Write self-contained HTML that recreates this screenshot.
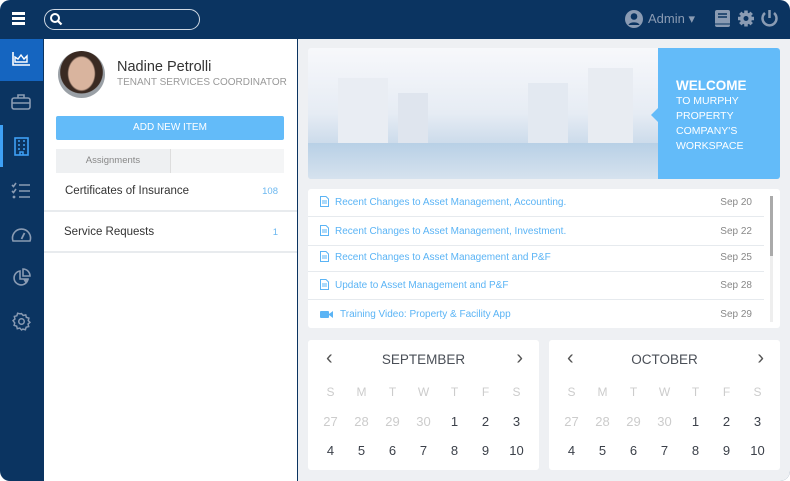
<!DOCTYPE html>
<html><head><meta charset="utf-8"><style>
*{box-sizing:border-box;margin:0;padding:0}
body{width:790px;height:481px;background:#fff;font-family:"Liberation Sans",sans-serif;overflow:hidden;position:relative}
.frame{position:absolute;left:0;top:0;width:790px;height:481px;background:#0b3461;border-radius:10px;overflow:hidden}
.search{position:absolute;left:44px;top:9px;width:156px;height:21px;border:1.5px solid #cfd8e3;border-radius:11px}
.side-act{position:absolute;left:0;top:39px;width:43px;height:42px;background:#1565c0}
.bar{position:absolute;left:0;top:125px;width:3px;height:42px;background:#3ea0f5}
.left{position:absolute;left:44px;top:39px;width:253px;height:442px;background:#fff}
.right{position:absolute;left:298px;top:39px;width:492px;height:442px;background:#eef0f3}
.ico{position:absolute}
.name{position:absolute;left:73px;top:20px;font-size:14.5px;color:#333}
.role{position:absolute;left:73px;top:38px;font-size:10px;color:#999}
.btn{position:absolute;left:12px;top:77px;width:228px;height:24px;background:#63bbf9;border-radius:2px;color:#fff;font-size:10px;text-align:center;line-height:24px}
.tabs{position:absolute;left:12px;top:110px;width:228px;height:24px;background:#f4f5f6}
.tab{position:absolute;left:0;top:0;width:115px;height:24px;background:#eef0f2;border-right:1px solid #ddd;color:#888;font-size:9.5px;text-align:center;line-height:24px}
.row{position:absolute;left:0;width:253px;height:40px;border-bottom:2px solid #e8ebee;font-size:11.5px;color:#333}
.row span{position:absolute;top:13px}
.row b{position:absolute;right:19px;top:14px;font-weight:normal;font-size:9.5px;color:#6cb8f0}
.banner{position:absolute;left:10px;top:9px;width:472px;height:131px;background:linear-gradient(180deg,#f7f8fb 0%,#e6ecf4 50%,#c4d6e8 80%,#dfe6ee 100%);border-radius:3px;overflow:hidden}
.welcome{position:absolute;left:350px;top:0;width:122px;height:131px;background:#63bbf9;color:#fff;padding:29px 0 0 18px;font-size:10.5px;line-height:15px}
.welcome:before{content:"";position:absolute;left:-7px;top:60px;border:7px solid transparent;border-right-color:#63bbf9;border-left:0}
.news{position:absolute;left:10px;top:150px;width:472px;height:139px;background:#fff;border-radius:3px}
.ni{position:absolute;left:0;width:456px;height:28px;border-bottom:1.5px solid #e6eaee;font-size:10px;color:#5bb4f5}
.ni .t{position:absolute;left:27px;top:8px}
.ni .d{position:absolute;right:12px;top:8px;color:#888}
.ni svg{position:absolute;left:12px;top:7px}
.sb{position:absolute;left:462px;top:7px;width:3px;height:126px;background:#eee}
.sb i{position:absolute;left:0;top:0;width:3px;height:60px;background:#aaa}
.cal{position:absolute;top:301px;width:231px;height:130px;background:#fff;border-radius:3px}
.cal .m{position:absolute;top:12px;width:100%;text-align:center;font-size:13.5px;color:#4a4f57}
.cal .ar{position:absolute;top:7px;font-size:20px;color:#555}
.cal table{position:absolute;left:7px;top:37px;width:217px;border-collapse:collapse}
.cal td{width:31px;height:29.5px;text-align:center;font-size:13px;color:#3c414a}
.cal tr.h td{color:#ccc;font-size:12px}
.cal td.g{color:#ccc}
</style></head><body>
<div class="frame">
<div class="ico" style="left:12px;top:12px;width:13px;height:2.5px;background:#fff;box-shadow:0 5px 0 #fff,0 10px 0 #fff"></div>
<div class="search"><svg width="14" height="14" style="position:absolute;left:4px;top:2px" viewBox="0 0 14 14"><circle cx="6" cy="6" r="4" stroke="#fff" stroke-width="2" fill="none"/><path d="M9 9l3.5 3.5" stroke="#fff" stroke-width="2.2"/></svg></div>
<svg class="ico" style="left:624px;top:9px" width="20" height="20" viewBox="0 0 20 20"><circle cx="10" cy="10" r="9" fill="#8a9bb3"/><circle cx="10" cy="7.5" r="3.3" fill="#0b3461"/><path d="M4.5 16c1-3.5 10-3.5 11 0" fill="#0b3461"/></svg>
<div class="ico" style="left:648px;top:11px;font-size:13px;color:#8a9bb3">Admin ▾</div>
<svg class="ico" style="left:714px;top:9px" width="17" height="19" viewBox="0 0 17 19"><rect x="1" y="1" width="15" height="17" rx="2" fill="#8a9bb3"/><path d="M4 5h9M4 8h9" stroke="#0b3461" stroke-width="1.5"/><path d="M1 15h15" stroke="#0b3461"/></svg>
<svg class="ico" style="left:737px;top:9px" width="18" height="19" viewBox="0 0 18 18"><circle cx="9" cy="9" r="6" fill="#8a9bb3"/><g stroke="#8a9bb3" stroke-width="3.5"><path d="M9 1v16M1 9h16M3.3 3.3l11.4 11.4M14.7 3.3L3.3 14.7"/></g><circle cx="9" cy="9" r="2.5" fill="#0b3461"/></svg>
<svg class="ico" style="left:760px;top:8px" width="19" height="20" viewBox="0 0 19 20"><path d="M5 5a7 7 0 1 0 9 0" stroke="#8a9bb3" stroke-width="2.5" fill="none"/><path d="M9.5 2v8" stroke="#8a9bb3" stroke-width="2.5"/></svg>
<div class="side-act"></div><div class="bar"></div>
<svg class="ico" style="left:11px;top:51px" width="20" height="16" viewBox="0 0 20 16"><path d="M2 1v13h17" stroke="#fff" stroke-width="1.6" fill="none"/><path d="M4 11V6l3 2 3-4 3 4 3-3v6z" stroke="#fff" stroke-width="1.4" fill="none"/></svg>
<svg class="ico" style="left:11px;top:94px" width="20" height="16" viewBox="0 0 20 16"><rect x="1" y="4" width="18" height="11" rx="2" stroke="#8a9bb3" stroke-width="1.6" fill="none"/><path d="M7 4V1h6v3M1 9h18" stroke="#8a9bb3" stroke-width="1.6" fill="none"/></svg>
<svg class="ico" style="left:14px;top:137px" width="15" height="19" viewBox="0 0 15 19"><rect x="1" y="1" width="13" height="17" stroke="#3ea0f5" stroke-width="1.6" fill="none"/><path d="M4 4h2M9 4h2M4 8h2M9 8h2M4 12h2M9 12h2M6 18v-3h3v3" stroke="#3ea0f5" stroke-width="1.5" fill="none"/></svg>
<svg class="ico" style="left:11px;top:182px" width="20" height="17" viewBox="0 0 20 17"><path d="M1 3l1.5 1.5L5 1M1 9l1.5 1.5L5 7M8 3h11M8 9h11M8 15h11" stroke="#8a9bb3" stroke-width="1.6" fill="none"/><circle cx="3" cy="15" r="1.4" fill="#8a9bb3"/></svg>
<svg class="ico" style="left:11px;top:226px" width="21" height="17" viewBox="0 0 21 17"><path d="M2 15a9 9 0 1 1 17 0z" stroke="#8a9bb3" stroke-width="1.6" fill="none"/><path d="M10.5 13l3-6" stroke="#8a9bb3" stroke-width="1.8"/></svg>
<svg class="ico" style="left:12px;top:268px" width="20" height="20" viewBox="0 0 20 20"><path d="M8 3a7 7 0 1 0 8 8h-8z" stroke="#8a9bb3" stroke-width="1.6" fill="none"/><path d="M11 1v7h7a7 7 0 0 0-7-7z" stroke="#8a9bb3" stroke-width="1.6" fill="none"/><path d="M11 11h6l-3 5z" fill="#8a9bb3"/></svg>
<svg class="ico" style="left:12px;top:312px" width="19" height="19" viewBox="0 0 18 18"><path d="M9 1.5l1.6 1.8 2.4-.6.6 2.4 2.4.7-.6 2.4L17 9.8l-1.8 1.6.6 2.4-2.4.6-.7 2.4-2.4-.6L9 17l-1.6-1.8-2.4.6-.6-2.4-2.4-.7.6-2.4L1 8.2l1.8-1.6-.6-2.4 2.4-.6.7-2.4 2.4.6z" stroke="#8a9bb3" stroke-width="1.4" fill="none"/><circle cx="9" cy="9" r="2.6" stroke="#8a9bb3" stroke-width="1.4" fill="none"/></svg>
<div class="left">
<div style="position:absolute;left:14px;top:12px;width:47px;height:47px;border-radius:50%;background:radial-gradient(ellipse 30% 38% at 50% 48%,#d9b49e 0 90%,transparent 100%),radial-gradient(circle at 50% 45%,#3a2a22 0 60%,#9aa0a6 62%);"></div>
<div class="name">Nadine Petrolli</div>
<div class="role">TENANT SERVICES COORDINATOR</div>
<div class="btn">ADD NEW ITEM</div>
<div class="tabs"><div class="tab">Assignments</div></div>
<div class="row" style="top:133px"><span style="left:21px">Certificates of Insurance</span><b>108</b></div>
<div class="row" style="top:174px"><span style="left:20px">Service Requests</span><b>1</b></div>
</div>
<div class="right">
<div class="banner">
<div style="position:absolute;left:30px;top:30px;width:50px;height:70px;background:#e9edf3"></div>
<div style="position:absolute;left:90px;top:45px;width:30px;height:55px;background:#dfe5ee"></div>
<div style="position:absolute;left:220px;top:35px;width:40px;height:60px;background:#e3e9f1"></div>
<div style="position:absolute;left:280px;top:20px;width:45px;height:85px;background:#e8ecf2"></div>
<div style="position:absolute;left:0;top:95px;width:350px;height:36px;background:linear-gradient(180deg,#b8d0e6,#d6e2ee)"></div>
<div class="welcome"><div style="font-size:13.5px;line-height:17px;font-weight:bold">WELCOME</div>TO MURPHY<br>PROPERTY<br>COMPANY'S<br>WORKSPACE</div>
</div>
<div class="news">
<div class="ni" style="top:0"><svg width="9" height="11" viewBox="0 0 9 11"><path d="M.5.5h5.5l2.5 2.5v7.5h-8z" stroke="#5bb4f5" fill="none"/><path d="M2 5h5M2 7h5" stroke="#5bb4f5"/></svg><span class="t">Recent Changes to Asset Management, Accounting.</span><span class="d">Sep 20</span></div>
<div class="ni" style="top:29px"><svg width="9" height="11" viewBox="0 0 9 11"><path d="M.5.5h5.5l2.5 2.5v7.5h-8z" stroke="#5bb4f5" fill="none"/><path d="M2 5h5M2 7h5" stroke="#5bb4f5"/></svg><span class="t">Recent Changes to Asset Management, Investment.</span><span class="d">Sep 22</span></div>
<div class="ni" style="top:55px"><svg width="9" height="11" viewBox="0 0 9 11"><path d="M.5.5h5.5l2.5 2.5v7.5h-8z" stroke="#5bb4f5" fill="none"/><path d="M2 5h5M2 7h5" stroke="#5bb4f5"/></svg><span class="t">Recent Changes to Asset Management and P&amp;F</span><span class="d">Sep 25</span></div>
<div class="ni" style="top:83px"><svg width="9" height="11" viewBox="0 0 9 11"><path d="M.5.5h5.5l2.5 2.5v7.5h-8z" stroke="#5bb4f5" fill="none"/><path d="M2 5h5M2 7h5" stroke="#5bb4f5"/></svg><span class="t">Update to Asset Management and P&amp;F</span><span class="d">Sep 28</span></div>
<div class="ni" style="top:112px;border:0"><svg width="13" height="9" viewBox="0 0 13 9" style="top:9px"><rect x="0" y="1" width="9" height="7" rx="1" fill="#5bb4f5"/><path d="M9 4l4-3v7l-4-3z" fill="#5bb4f5"/></svg><span class="t" style="left:32px">Training Video: Property &amp; Facility App</span><span class="d">Sep 29</span></div>
<div class="sb"><i></i></div>
</div>
<div class="cal" style="left:10px"><span class="ar" style="left:18px">‹</span><div class="m">SEPTEMBER</div><span class="ar" style="right:16px">›</span>
<table><tr class="h"><td>S</td><td>M</td><td>T</td><td>W</td><td>T</td><td>F</td><td>S</td></tr>
<tr><td class="g">27</td><td class="g">28</td><td class="g">29</td><td class="g">30</td><td>1</td><td>2</td><td>3</td></tr>
<tr><td>4</td><td>5</td><td>6</td><td>7</td><td>8</td><td>9</td><td>10</td></tr></table></div>
<div class="cal" style="left:251px"><span class="ar" style="left:18px">‹</span><div class="m">OCTOBER</div><span class="ar" style="right:16px">›</span>
<table><tr class="h"><td>S</td><td>M</td><td>T</td><td>W</td><td>T</td><td>F</td><td>S</td></tr>
<tr><td class="g">27</td><td class="g">28</td><td class="g">29</td><td class="g">30</td><td>1</td><td>2</td><td>3</td></tr>
<tr><td>4</td><td>5</td><td>6</td><td>7</td><td>8</td><td>9</td><td>10</td></tr></table></div>
</div>
</div>
</body></html>
